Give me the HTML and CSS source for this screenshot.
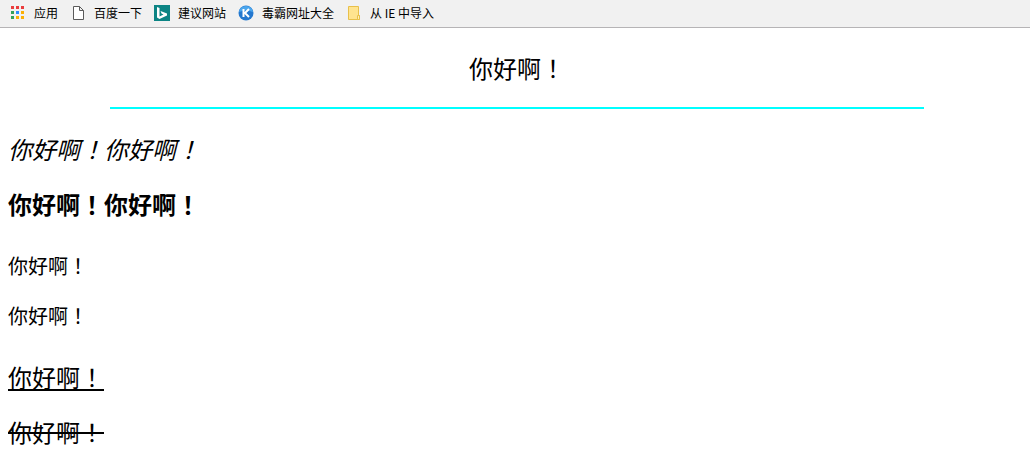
FILE: index.html
```
<!DOCTYPE html>
<html lang="zh-CN">
<head>
    <meta charset="UTF-8">
    <meta name="viewport" content="width=device-width, initial-scale=1.0">
    <title>你好啊！</title>
    <link rel="stylesheet" href="styles.css">
</head>
<body>
    <nav class="bookmarks">
        <a href="#">
            <svg width="16" height="16" viewBox="0 0 16 16">
                <path fill="#ea3c3c" d="M1 1h3v3H1zM6 1h3v3H6zM11 1h3v3h-3z"/>
                <path fill="#34a05a" d="M1 6h3v3H1zM1 11h3v3H1z"/>
                <path fill="#2b8cff" d="M6 6h3v3H6z"/>
                <path fill="#fbb005" d="M11 6h3v3h-3zM6 11h3v3H6zM11 11h3v3h-3z"/>
            </svg>
            <span>应用</span>
        </a>
        <a href="#">
            <svg width="16" height="16" viewBox="0 0 16 16">
                <path fill="#fff" stroke="#5a5a5a" d="M3.500 1.500h6l4 4v9h-10zM9.500 1.500v4h4"/>
            </svg>
            <span>百度一下</span>
        </a>
        <a href="#">
            <svg width="16" height="16" viewBox="0 0 16 16">
                <rect width="16" height="16" fill="#0c8484"/>
                <path fill="#fff" d="M3 2l2.500 1v8.500l4-2L7.500 8.500 6.500 6l6.500 2.500v2L5.500 14 3 12.500z"/>
            </svg>
            <span>建议网站</span>
        </a>
        <a href="#">
            <svg width="16" height="16" viewBox="0 0 16 16">
                <circle cx="8" cy="8" r="7.500" fill="#2478cf"/>
                <path fill="#4ba5ec" d="M1 7a7 6 0 0 1 14 0q-7-3-14 0z"/>
                <path fill="none" stroke="#fff" stroke-width="2" d="M5.500 4v8M11 4L7 8l4 4"/>
            </svg>
            <span>毒霸网址大全</span>
        </a>
        <a href="#">
            <svg width="16" height="16" viewBox="0 0 16 16">
                <path fill="#ffe48f" stroke="#e8c04a" d="M2.500 1.500h10v9h1v4h-11z"/>
                <path fill="#fff0b8" stroke="#e8c04a" d="M11.500 14.500v-4h2v4z"/>
            </svg>
            <span>从 IE 中导入</span>
        </a>
    </nav>

    <main class="content" lang="zh-TW">
        <p class="title">你好啊！</p>
        <hr>
        <p><em>你好啊！你好啊！</em></p>
        <p><strong>你好啊！你好啊！</strong></p>
        <div class="small">
            <p>你好啊！</p>
            <p>你好啊！</p>
        </div>
        <p><u>你好啊！</u></p>
        <p><del>你好啊！</del></p>
    </main>
</body>
</html>
```
FILE: styles.css
```
body {
    margin: 0;
    background-color: #fff;
    color: #000;
    font-family: "Noto Sans CJK SC", sans-serif;
}
.bookmarks {
    display: flex;
    gap: 12px;
    height: 25px;
    padding: 0 0 2px 10px;
    background-color: #f1f1f1;
    border-bottom: 1px solid #b6b4b6;
    font-size: 12px;
}
.bookmarks a {
    display: flex;
    align-items: center;
    gap: 8px;
    color: #000;
    text-decoration: none;
    white-space: nowrap;
}
.content {
    padding: 24px 4px 0 8px;
    font-family: "Noto Sans CJK TC", sans-serif;
    font-size: 24px;
    line-height: 31px;
}
.content p {
    margin: 0 0 24px;
}
.content .title {
    text-align: center;
}
hr {
    width: 80%;
    height: 2px;
    margin: 0 auto 24px;
    border: 0;
    background-color: #0ff;
}
.small {
    padding: 10px 0 8px;
    font-size: 20px;
    line-height: 26px;
}
u, del {
    text-decoration-thickness: 2px;
}
u {
    text-underline-offset: 2px;
}
```
